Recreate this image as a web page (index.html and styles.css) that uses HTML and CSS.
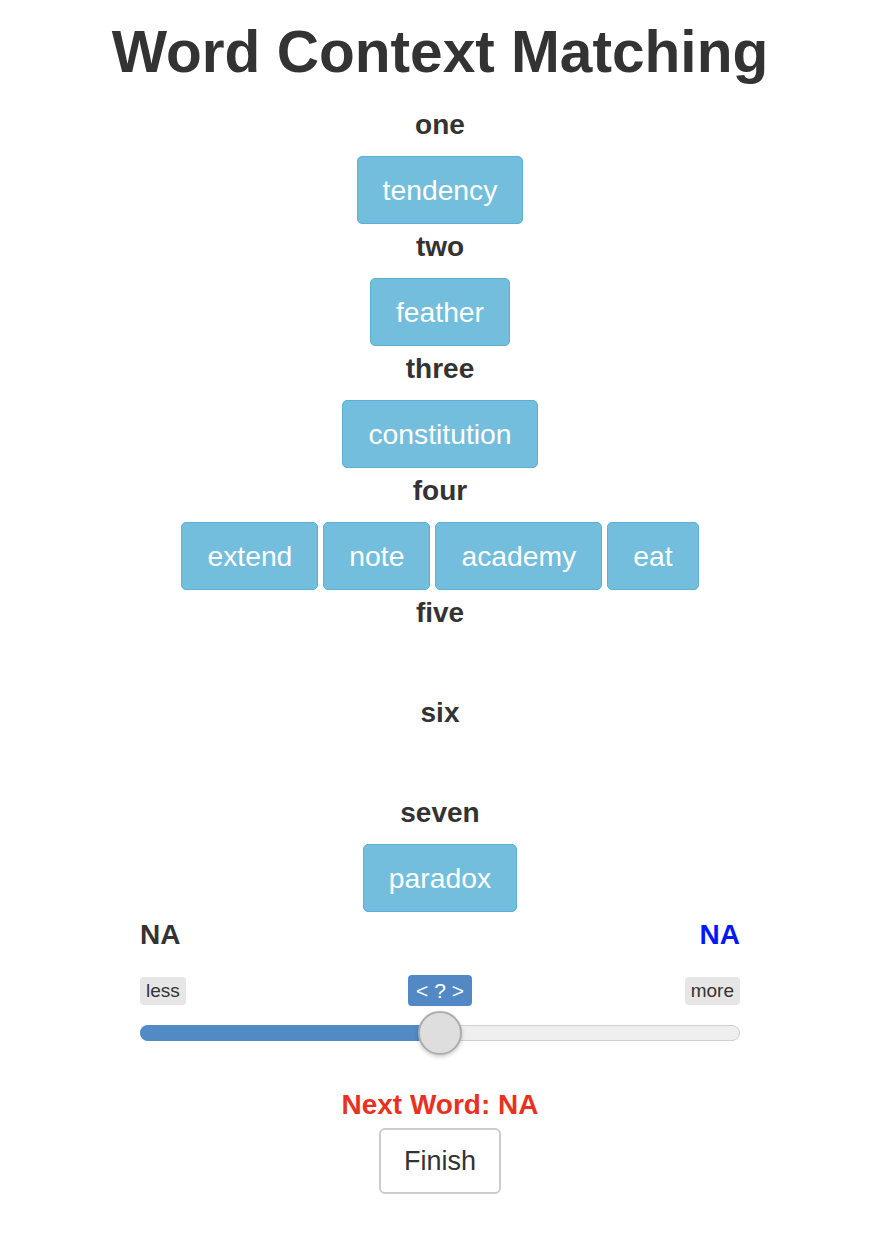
FILE: index.html
```html
<!DOCTYPE html>
<html lang="en">
<head>
  <meta charset="UTF-8">
  <meta name="viewport" content="width=device-width, initial-scale=1.0">
  <title>Word Context Matching</title>
  <link rel="stylesheet" href="styles.css">
</head>
<body>
  <div id="app">
    <h1 class="title">Word Context Matching</h1>

    <div class="group">
      <h3 class="label">one</h3>
      <div class="words">
        <button class="word">tendency</button>
      </div>
    </div>
    <div class="group">
      <h3 class="label">two</h3>
      <div class="words">
        <button class="word">feather</button>
      </div>
    </div>
    <div class="group">
      <h3 class="label">three</h3>
      <div class="words">
        <button class="word">constitution</button>
      </div>
    </div>
    <div class="group">
      <h3 class="label">four</h3>
      <div class="words">
        <button class="word">extend</button>
        <button class="word">note</button>
        <button class="word">academy</button>
        <button class="word">eat</button>
      </div>
    </div>
    <div class="group">
      <h3 class="label">five</h3>
      <div class="words"></div>
    </div>
    <div class="group">
      <h3 class="label">six</h3>
      <div class="words"></div>
    </div>
    <div class="group">
      <h3 class="label">seven</h3>
      <div class="words">
        <button class="word">paradox</button>
      </div>
    </div>

    <div id="scale">
      <div class="scale-ends">
        <span class="end-left">NA</span>
        <span class="end-right">NA</span>
      </div>
      <div class="scale-tags">
        <span class="tag tag-less">less</span>
        <span class="tag tag-value">&lt; ? &gt;</span>
        <span class="tag tag-more">more</span>
      </div>
      <div class="slider">
        <div class="slider-fill" style="width: 50%;"></div>
        <div class="slider-thumb" style="left: 50%;"></div>
      </div>
    </div>

    <div class="next-word">Next Word: NA</div>
    <button class="finish">Finish</button>
  </div>
</body>
</html>
```

FILE: styles.css
```css
body {
  font-family: "Liberation Sans", Arial, sans-serif;
  margin: 0;
  padding: 0 8px 0 0;
  background-color: #fff;
  color: #333;
}
#app {
  width: 600px;
  margin: 0 auto;
  text-align: center;
}
.title {
  font-size: 58.6px;
  font-weight: bold;
  white-space: nowrap;
  margin: 0 -100px;
  padding-top: 18px;
  height: 84px;
  line-height: 68px;
}
.label {
  font-size: 28px;
  font-weight: bold;
  line-height: 30px;
  height: 30px;
  margin: 8px 0 16px;
}
.words {
  min-height: 46px;
  display: flex;
  justify-content: center;
  gap: 5px;
}
.word {
  font-family: "Liberation Sans", Arial, sans-serif;
  font-size: 28.3px;
  height: 68px;
  padding: 0 25px;
  color: #fff;
  background-color: #73bedc;
  border: 1px solid #5cb0d4;
  border-radius: 5px;
  cursor: pointer;
}
#scale {
  margin-top: 8px;
}
.scale-ends {
  display: flex;
  justify-content: space-between;
  font-size: 28px;
  font-weight: bold;
  line-height: 30px;
}
.end-right {
  color: #0019f5;
}
.scale-tags {
  display: grid;
  grid-template-columns: 1fr auto 1fr;
  align-items: center;
  margin-top: 25px;
  height: 31px;
}
.tag {
  font-size: 19px;
  line-height: 28px;
  padding: 0 6px;
  background: #e6e6e6;
  border-radius: 4px;
}
.tag-less {
  justify-self: start;
}
.tag-more {
  justify-self: end;
}
.tag-value {
  background: #5289c5;
  color: #fff;
  line-height: 31px;
  padding: 0 8px;
  font-size: 21px;
}
.slider {
  position: relative;
  height: 16px;
  margin-top: 19px;
  background: #efefef;
  border: 1px solid #cfcfcf;
  border-radius: 8px;
  box-sizing: border-box;
}
.slider-fill {
  background: #528ac6;
  border-radius: 8px 0 0 8px;
  margin: -1px 0 0 -1px;
  height: 16px;
}
.slider-thumb {
  position: absolute;
  top: 50%;
  width: 40px;
  height: 40px;
  margin: -22px 0 0 -22px;
  background: #dedede;
  border: 2px solid #adadad;
  border-radius: 50%;
  box-shadow: 0 2px 4px rgba(0, 0, 0, 0.2);
}
.next-word {
  margin-top: 49px;
  font-size: 28px;
  font-weight: bold;
  line-height: 30px;
  color: #e8321f;
}
.finish {
  margin-top: 8px;
  font-family: "Liberation Sans", Arial, sans-serif;
  font-size: 27px;
  color: #333;
  background: #fff;
  width: 122px;
  height: 66px;
  border: 2px solid #ccc;
  border-radius: 6px;
  cursor: pointer;
}
```
